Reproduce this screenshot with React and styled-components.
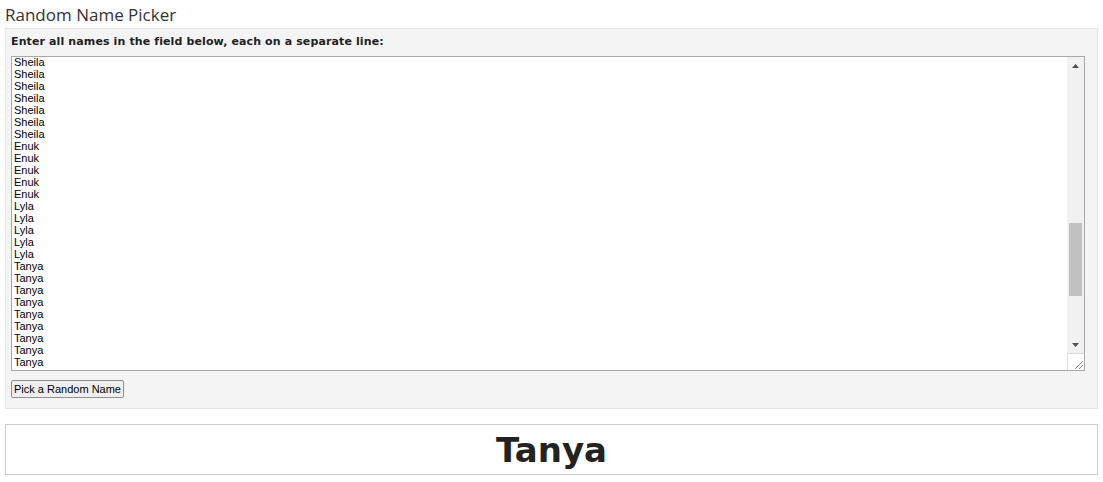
import React, { useEffect, useRef } from 'react';
import styled, { createGlobalStyle } from 'styled-components';

// group sizes roughly match the scroll position in the picture
const groups = [
  ['Aiyana', 7], ['Kai', 6], ['Mira', 6], ['Jonah', 5], ['Leilani', 6],
  ['Dakota', 5], ['Noa', 6], ['Hana', 5], ['Koa', 6],
  ['Sheila', 7], ['Enuk', 5], ['Lyla', 5], ['Tanya', 9],
  ['Ravi', 6], ['Oona', 8],
];

const names = groups.flatMap(([n, c]) => Array(c).fill(n)).join('\n');
const firstVisible = groups.slice(0, 9).reduce((s, [, c]) => s + c, 0);

const GlobalStyle = createGlobalStyle`
  body {
    margin: 0;
    background: #fff;
    font-family: "Liberation Sans", Arial, sans-serif;
  }
`;

const Page = styled.div`
  padding: 0 5px;
`;

const Title = styled.h1`
  margin: 0;
  height: 28px;
  font-family: "Open Sans", "Noto Sans", sans-serif;
  font-weight: 400;
  font-size: 17px;
  line-height: 29px;
  color: #333;
`;

const Panel = styled.div`
  background: #f4f4f4;
  border: 1px solid #e4e4e4;
  padding: 6px 12px 10px 5px;
`;

const Label = styled.div`
  font-family: "DejaVu Sans", Verdana, sans-serif;
  font-weight: bold;
  font-size: 11px;
  letter-spacing: 0.12px;
  line-height: 14px;
  color: #222;
  margin-bottom: 7px;
`;

const FieldBox = styled.div`
  display: flex;
  height: 315px;
  box-sizing: border-box;
  border: 1px solid #a9a9a9;
  background: #fff;
`;

const NameField = styled.textarea`
  flex: 1;
  min-width: 0;
  margin: 0;
  padding: 1px 2px;
  border: none;
  background: #fff;
  color: #000;
  font-family: "Liberation Sans", Arial, sans-serif;
  font-size: 11px;
  line-height: 12px;
  resize: none;
  outline: none;
  overflow: hidden;
`;

const ScrollBar = styled.div`
  width: 17px;
  display: flex;
  flex-direction: column;
  background: #f1f1f1;
`;

const ArrowButton = styled.div`
  height: 17px;
  display: flex;
  align-items: center;
  justify-content: center;
  padding-top: ${p => (p.$down ? '1px' : '0')};
  box-sizing: border-box;
`;

const Track = styled.div`
  flex: 1;
  padding: 0 2px;
`;

const Thumb = styled.div`
  height: 73px;
  background: #c1c1c1;
`;

const Corner = styled.div`
  height: 17px;
  box-sizing: border-box;
  background: #fff;
  border-left: 1px solid #dcdcdc;
  border-top: 1px solid #dcdcdc;
  display: flex;
  align-items: flex-end;
  justify-content: flex-end;
`;

const PickButton = styled.button`
  margin-top: 9px;
  height: 18px;
  padding: 0 2px;
  border: 1px solid #8f8f8f;
  border-radius: 2px;
  background: #efefef;
  color: #000;
  font-family: "Liberation Sans", Arial, sans-serif;
  font-size: 11px;
  line-height: 14px;
`;

const Result = styled.div`
  margin-top: 15px;
  height: 49px;
  border: 1px solid #ccc;
  background: #fff;
  display: flex;
  align-items: center;
  justify-content: center;
  font-family: "DejaVu Sans", Verdana, sans-serif;
  font-weight: bold;
  font-size: 34px;
  color: #222;
`;

const Arrow = ({ down }) => (
  <svg width="7" height="4" viewBox="0 0 7 4">
    <polygon points={down ? '0,0 7,0 3.5,4' : '0,4 7,4 3.5,0'} fill="#505050" />
  </svg>
);

const Grip = () => (
  <svg width="14" height="14" viewBox="0 0 14 14">
    <path d="M5 13 L13 5 M9 13 L13 9" stroke="#888" strokeWidth="1" fill="none" />
  </svg>
);

export default function App() {
  const field = useRef(null);

  useEffect(() => {
    if (field.current) field.current.scrollTop = firstVisible * 12 + 2;
  }, []);

  return (
    <Page>
      <GlobalStyle />
      <Title>Random Name Picker</Title>
      <Panel>
        <Label>Enter all names in the field below, each on a separate line:</Label>
        <FieldBox>
          <NameField ref={field} defaultValue={names} spellCheck={false} />
          <ScrollBar>
            <ArrowButton><Arrow /></ArrowButton>
            <Track>
              <Thumb style={{ marginTop: 149 }} />
            </Track>
            <ArrowButton $down><Arrow down /></ArrowButton>
            <Corner><Grip /></Corner>
          </ScrollBar>
        </FieldBox>
        <PickButton>Pick a Random Name</PickButton>
      </Panel>
      <Result>Tanya</Result>
    </Page>
  );
}
